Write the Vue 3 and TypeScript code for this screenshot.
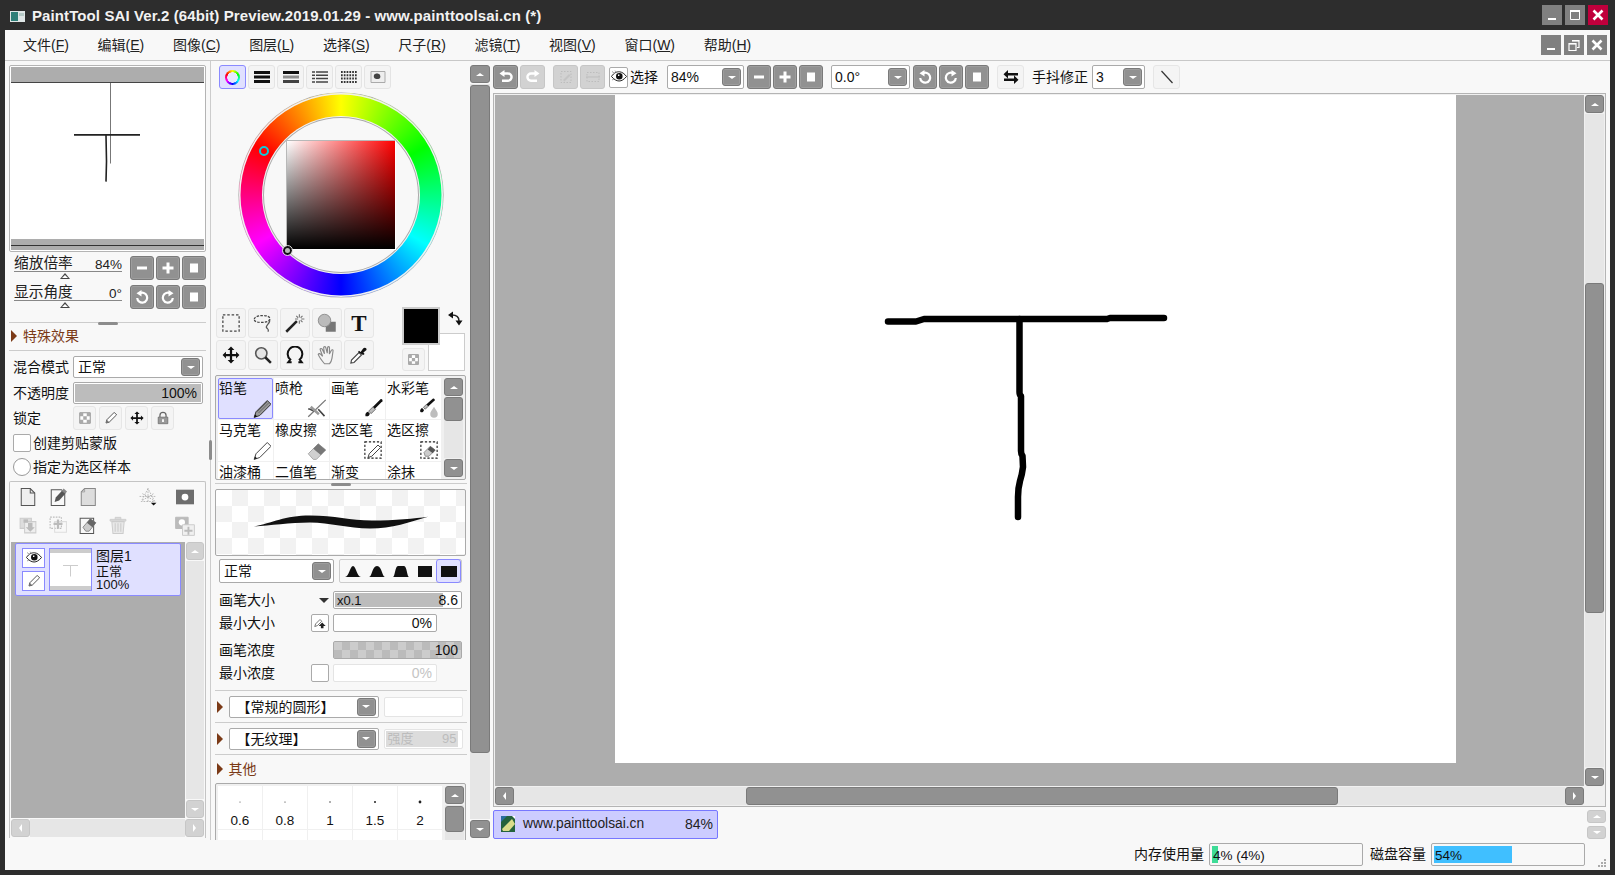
<script setup lang="ts">
import { h, type FunctionalComponent } from 'vue'

type Shape = { d: string; f?: string; s?: string; w?: number; o?: number; da?: string }

// every icon is drawn on a 16x16 grid
const ICONS: Record<string, Shape[]> = {
  minus: [{ d: 'M3 6.5h10v3H3z', f: '#fff' }],
  plus: [{ d: 'M6.5 2.5h3v4h4v3h-4v4h-3v-4h-4v-3h4z', f: '#fff' }],
  stop: [{ d: 'M4 3.5h8v9H4z', f: '#fff' }],
  rotL: [
    { d: 'M5.6 4.4A5 5 0 1 1 3.2 9', s: '#fff', w: 2.2 },
    { d: 'M7.5 1v6.5L2.5 4.2z', f: '#fff' },
  ],
  rotR: [
    { d: 'M10.4 4.4A5 5 0 1 0 12.8 9', s: '#fff', w: 2.2 },
    { d: 'M8.5 1v6.5l5-3.3z', f: '#fff' },
  ],
  undo: [
    { d: 'M5 4.5h5a3.6 3.6 0 0 1 0 7.2H4', s: '#fff', w: 2.4 },
    { d: 'M6.5 1v7L1.5 4.5z', f: '#fff' },
  ],
  redo: [
    { d: 'M11 4.5H6a3.6 3.6 0 0 0 0 7.2h6', s: '#fff', w: 2.4 },
    { d: 'M9.5 1v7l5-3.5z', f: '#fff' },
  ],
  flipSel: [
    { d: 'M3 2.5h10v11H3z', s: '#bdbdbd', w: 1, da: '1.5 1.5' },
    { d: 'M5 11 11 5l1.5 1.5-6 6z', f: '#c4c4c4' },
  ],
  flipH: [
    { d: 'M2 3.5h12v9H2z', s: '#bdbdbd', w: 1, da: '1.5 1.5' },
    { d: 'M1 8h14', s: '#bdbdbd', w: 1 },
  ],
  swap: [{ d: 'M5 1v3h10v2.4H5v3L.5 5.2zM11 6.6v3H1V12h10v3l4.5-4.2z', f: '#111' }],
  line: [{ d: 'M2.5 2 13.5 14', s: '#333', w: 1.2 }],
  eye: [
    { d: 'M.5 7.5C3 3.5 6 2.6 8.5 2.8c2.6.2 5 2 7 4.7-2.4 3-5 4.5-7.4 4.5-2.6 0-5.2-1.6-7.6-4.5z', f: '#fff', s: '#222', w: 1 },
    { d: 'M5 7.2a3.3 3.3 0 1 0 6.6 0 3.3 3.3 0 0 0-6.6 0z', f: '#111' },
    { d: 'M7 5.6h1.4v1.4H7z', f: '#fff' },
    { d: 'M1 2.5 3 4M4 1.6 5 3M1 11l2-1', s: '#666', w: 0.6 },
  ],
  pencilSm: [
    { d: 'M3 13l.8-3.2 7.4-7.4 2.4 2.4-7.4 7.4z', f: '#fff', s: '#444', w: 0.9 },
    { d: 'M3 13l.8-3.2 2.4 2.4z', f: '#777' },
  ],
  wheelBars: [{ d: 'M0 2h16v3H0zM0 6.5h16v3H0zM0 11h16v3H0z', f: '#111' }],
  fadeBars: [
    { d: 'M0 2h16v3H0z', f: '#111' },
    { d: 'M0 6.5h16v3H0z', f: '#111', o: 0.45 },
    { d: 'M0 11h16v3H0z', f: '#222', o: 0.85 },
  ],
  rows: [{ d: 'M0 3h16M0 6.3h16M0 9.6h16M0 12.9h16', s: '#444', w: 1.5, da: '3 1 12 0' }],
  dots: [{ d: 'M0 3h16M0 6.3h16M0 9.6h16M0 12.9h16', s: '#333', w: 2, da: '1.7 1.1' }],
  scratch: [
    { d: 'M1 2.5h14v11H1z', f: '#eee', s: '#aaa', w: 1 },
    { d: 'M4 6c1-2 5-2 6 0s0 4-2 4-5 0-4-4z', f: '#444' },
  ],
  // tools
  selRect: [{ d: 'M1.5 1.5h13v13h-13z', s: '#444', w: 1, da: '2 1.5' }],
  lasso: [
    { d: 'M1 5c0-2 4-3 7-3s6 1 5.5 3-4 2.5-7 2.5S1 7 1 5z', s: '#444', w: 1, da: '2 1' },
    { d: 'M13 5c2 3-4 5-2 7 1 1 2 1.2 1 3', s: '#555', w: 1 },
  ],
  wand: [
    { d: 'M1 15 9.5 6.5', s: '#222', w: 2 },
    { d: 'M11.5 1v2.5M11.5 6v2.5M8 4.8h2.5M13 4.8h2.5M9 2.3l1.5 1.5M14 2.3l-1.5 1.5M14 7.3l-1.5-1.5', s: '#777', w: 0.9 },
  ],
  shape: [
    { d: 'M7 7h8v8H7z', f: '#777' },
    { d: 'M1 6a5 5 0 1 0 10 0A5 5 0 0 0 1 6z', f: '#bbb', s: '#888', w: 0.7 },
  ],
  move: [{ d: 'M8 .5l3 3H9V7h3.5V5l3 3-3 3V9H9v3.5h2l-3 3-3-3h2V9H3.5v2l-3-3 3-3v2H7V3.5H5z', f: '#111' }],
  zoomTool: [
    { d: 'M1.5 6.5a5 5 0 1 0 10 0 5 5 0 0 0-10 0z', f: '#e4e4e4', s: '#555', w: 1.4 },
    { d: 'M10 10l5 5', s: '#222', w: 2.2 },
  ],
  rotTool: [{ d: 'M5 14.5H2l1.8-2.5a6.5 6.5 0 1 1 8.4 0L14 14.5h-3', s: '#111', w: 1.8 }],
  hand: [
    { d: 'M6 15C3.5 12 1.5 9 1 7.5c.5-1 1.5-.5 2 0L4.5 9l-2-5.500c0-1 1.300-1 1.800 0L6 7 5.300 2c0-1 1.400-1 1.700 0l1.200 4.500L8.500 2c.3-1 1.500-1 1.500.2l-.1 5 1.600-3c.6-.8 1.600-.3 1.300.8l-.8 5.500c-.3 2-1 3.500-2 4.500z', f: '#f4f4f4', s: '#888', w: 0.9 },
  ],
  dropper: [
    { d: 'M1.5 14.5 2 12l6-6 2 2-6 6z', f: '#fff', s: '#444', w: 0.9 },
    { d: 'M8 4.5l1.3 1 2-2.8c1-1 3-.8 2.7 1.2l-2.500 2 1 1.300-1.200.8L7.200 5.500z', f: '#111' },
  ],
  cornerSwap: [
    { d: 'M5 4C9 4 12 6 12 10', s: '#222', w: 1.5 },
    { d: 'M6 .5v7L1 4zM8.500 9.500h7L12 14.500z', f: '#111' },
  ],
  lockAlpha: [
    { d: 'M2 2h12v12H2z', f: '#fff', s: '#888', w: 1 },
    { d: 'M2 2h4v4H2zM10 2h4v4h-4zM6 6h4v4H6zM2 10h4v4H2zM10 10h4v4h-4z', f: '#aaa' },
  ],
  lockLock: [
    { d: 'M4.5 7V5a3.5 3.5 0 0 1 7 0v2', s: '#666', w: 1.4 },
    { d: 'M2.5 7h11v7.5h-11z', f: '#999', s: '#666', w: 0.8 },
    { d: 'M7 9.5h2v3H7z', f: '#fff' },
  ],
  minSize: [
    { d: 'M2 12l1-3 5-5 2 2-5 5z', f: '#fff', s: '#666', w: 1 },
    { d: 'M10.5 7.5l4 4H12V14H9v-2.5H6.5z', f: '#222' },
  ],
  // brushes
  pencil: [
    { d: 'M2.5 15.5 4 11 13 2l3 3-9 9z', f: '#999', s: '#333', w: 0.8 },
    { d: 'M5 11l8-8M6 12l8-8', s: '#555', w: 0.6 },
    { d: 'M2.5 15.5 3.3 13 5 14.7z', f: '#111' },
  ],
  airbrush: [
    { d: 'M1 15 15 1.5', s: '#777', w: 1 },
    { d: 'M1 9c2-1 3 2 5 1M9 9l5 5.5', s: '#444', w: 1.3 },
    { d: 'M3 7 9.5 13', s: '#999', w: 2 },
  ],
  brush: [
    { d: 'M2 14.5c-.5-2 .5-3 2-3.5l1.5 1.5c-.5 1.5-1.5 2.5-3.5 2z', f: '#111' },
    { d: 'M4.5 10.5 8 7l2 2-3.5 3.5z', f: '#bbb', s: '#555', w: 0.6 },
    { d: 'M8 7l6-6c1-.5 2 .5 1.500 1.500L9.500 8.500z', f: '#111' },
  ],
  water: [
    { d: 'M1 11c-.5-1.500.5-2.500 1.500-3L4 9.500C3.500 11 2.500 12 1 11z', f: '#111' },
    { d: 'M3.500 7.500 6 5l1.500 1.500L5 9z', f: '#bbb', s: '#555', w: 0.6 },
    { d: 'M6 5l5-4.500c1-.5 2 .5 1.500 1.500L7.500 6.500z', f: '#111' },
    { d: 'M12 7c1.500 2.500 3 4 3 5.800a3 3 0 0 1-6 0c0-1.800 1.500-3.300 3-5.800z', f: '#bdbdbd' },
  ],
  marker: [
    { d: 'M2.5 15.5 4 11 13 2l3 3-9 9z', f: '#fff', s: '#444', w: 0.8 },
    { d: 'M2.5 15.5 3.3 13 5 14.7z', f: '#222' },
  ],
  eraser: [
    { d: 'M1 11l8-8 6 5-7.500 7.500H5z', f: '#d0d0d0', s: '#aaa', w: 0.8 },
    { d: 'M5 7l4-4 6 5-4 4z', f: '#777' },
  ],
  selPen: [
    { d: 'M1.5 1.5h13v13h-13z', s: '#222', w: 0.9, da: '1.8 1.4' },
    { d: 'M4 14l1-3 7-7 2 2-7 7z', f: '#fff', s: '#444', w: 0.8 },
  ],
  selErase: [
    { d: 'M1.5 1.5h13v13h-13z', s: '#222', w: 0.9, da: '1.8 1.4' },
    { d: 'M5 13 4 10l5-5 4 3-5 5z', f: '#ccc', s: '#888', w: 0.7 },
    { d: 'M7 7.5 9 5l4 3-2 2.500z', f: '#555' },
  ],
  // layer panel
  newDoc: [{ d: 'M2 .5h8l4 4v11H2z', f: '#efefef', s: '#555', w: 0.9 }, { d: 'M10 .5v4h4', s: '#555', w: 0.9 }],
  penDoc: [
    { d: 'M2 1.5h9l3 3v11H2z', f: '#f8f8f8', s: '#555', w: 0.9 },
    { d: 'M5 12.5 6 8.500l5.500-6 3 2.500-5.500 6z', f: '#555' },
    { d: 'M11.5 2.500 13 .5l3 2.500-1.500 2z', f: '#888' },
  ],
  folder: [{ d: 'M2 3.5 5 .5h9.500v15H2z', f: '#ddd', s: '#888', w: 0.9 }, { d: 'M5 .5v3H2', s: '#999', w: 0.7 }],
  blend: [
    { d: 'M8 .5 2 12h12zM8 .5V12M.5 7.5h15M3 11l10-6M3 5l10 6', s: '#aaa', w: 0.7, da: '1.5 1' },
    { d: 'M10.5 13h5L13 15.5z', f: '#111' },
  ],
  mask: [{ d: 'M0 1.5h16v13H0z', f: '#6d6d6d' }, { d: 'M5 8a3 3 0 1 0 6 0 3 3 0 0 0-6 0z', f: '#fff' }],
  merge: [
    { d: 'M1 2h10v9H1z', f: '#ddd', s: '#ccc', w: 0.9 },
    { d: 'M5 5h10v10H5z', f: '#eee', s: '#ccc', w: 0.9 },
    { d: 'M8 6h4v4h2l-4 4-4-4h2z', f: '#bbb' },
    { d: 'M4 3h4v3H4z', f: '#bbb' },
  ],
  addLayer: [
    { d: 'M1 1h10v10H1z', s: '#bbb', w: 1, da: '1.5 1' },
    { d: 'M5 5h10.5v9.500H5z', s: '#ddd', w: 0.9 },
    { d: 'M7 3h2v3h3v2H9v3H7V8H4V6h3z', f: '#bbb' },
  ],
  erasePage: [
    { d: 'M1 2h12v13.5H1z', f: '#f8f8f8', s: '#555', w: 0.9 },
    { d: 'M3.5 10 10 2.500l5 3.500-6 7.500H6z', f: '#ccc', s: '#777', w: 0.7 },
    { d: 'M7 6l3-3.500 5 3.500-3 4z', f: '#666' },
  ],
  trash: [
    { d: 'M1 3h14v1.5H1zM5.5 3V1.200h5V3', f: '#ddd', s: '#ccc', w: 0.8 },
    { d: 'M2.5 5h11l-1 10.500h-9z', f: '#e8e8e8', s: '#ccc', w: 0.9 },
    { d: 'M5.5 6.5V14M8 6.5V14M10.5 6.5V14', s: '#ccc', w: 1 },
  ],
  addMask: [
    { d: 'M.5 1h10v9H.5z', f: '#bbb', s: '#bbb', w: 0.8 },
    { d: 'M3 5a2.5 2.5 0 1 0 5 0 2.5 2.5 0 0 0-5 0z', f: '#fff' },
    { d: 'M6 7h9.5v8.500H6z', f: '#f0f0f0', s: '#ccc', w: 0.8 },
    { d: 'M10 8.5h1.5V11H14v1.500h-2.500V15H10v-2.500H7.500V11H10z', f: '#bbb' },
  ],
  // mdi + window buttons
  winMin: [{ d: 'M4 11h8v2H4z', f: '#fff' }],
  winMax: [{ d: 'M3.5 3.5h9v9h-9z', s: '#fff', w: 1 }, { d: 'M3 3h10v2H3z', f: '#fff' }],
  winRestore: [
    { d: 'M6 3.5h7v7H11', s: '#fff', w: 1.2 },
    { d: 'M6 3h7v1.600H6z', f: '#fff' },
    { d: 'M3 6.5h7v7H3z', s: '#fff', w: 1.2 },
    { d: 'M3 6h7v1.600H3z', f: '#fff' },
  ],
  winClose: [{ d: 'M3.5 3.5l9 9M12.5 3.5l-9 9', s: '#fff', w: 2.6 }],
}

const Ico: FunctionalComponent<{ name: string; size?: number }> = (p) =>
  h(
    'svg',
    { width: p.size ?? 16, height: p.size ?? 16, viewBox: '0 0 16 16', 'aria-hidden': 'true' },
    (ICONS[p.name] ?? []).map((s) =>
      h('path', {
        d: s.d,
        fill: s.f ?? 'none',
        stroke: s.s ?? 'none',
        'stroke-width': s.w ?? 1,
        opacity: s.o ?? 1,
        'stroke-dasharray': s.da,
      }),
    ),
  )
Ico.props = ['name', 'size']

const menus = [
  ['文件', 'F'], ['编辑', 'E'], ['图像', 'C'], ['图层', 'L'], ['选择', 'S'],
  ['尺子', 'R'], ['滤镜', 'T'], ['视图', 'V'], ['窗口', 'W'], ['帮助', 'H'],
]

const colorTabs = ['', 'wheelBars', 'fadeBars', 'rows', 'dots', 'scratch']

const tools = ['selRect', 'lasso', 'wand', 'shape', 'T', 'move', 'zoomTool', 'rotTool', 'hand', 'dropper']

const brushes = [
  { name: '铅笔', icon: 'pencil', active: true },
  { name: '喷枪', icon: 'airbrush' },
  { name: '画笔', icon: 'brush' },
  { name: '水彩笔', icon: 'water' },
  { name: '马克笔', icon: 'marker' },
  { name: '橡皮擦', icon: 'eraser' },
  { name: '选区笔', icon: 'selPen' },
  { name: '选区擦', icon: 'selErase' },
  { name: '油漆桶', icon: '' },
  { name: '二值笔', icon: '' },
  { name: '渐变', icon: '' },
  { name: '涂抹', icon: '' },
]

const shapes = [
  'M0 12C4 12 5 1 8 1s4 11 8 11z',
  'M0 12C3 12 3 1 8 1s5 11 8 11z',
  'M0 12C2 12 2 1 5 1h6c3 0 3 11 5 11z',
  'M1 1h14v11H1z',
  'M0 1h16v11H0z',
]

const dotSizes = [
  { label: '0.6', r: 0.5 },
  { label: '0.8', r: 0.6 },
  { label: '1', r: 0.7 },
  { label: '1.5', r: 1 },
  { label: '2', r: 1.4 },
]

const fileName = 'www.painttoolsai.cn'
</script>

<template>
  <div class="app">
    <header class="titlebar">
      <svg class="app-icon" width="15" height="11" viewBox="0 0 15 11" aria-hidden="true">
        <path d="M0 0h15v11H0z" fill="#dfe6e6" />
        <path d="M1 1h7v9H1z" fill="#2f7f78" />
        <path d="M9 2h5v3H9z" fill="#b5c9c6" />
      </svg>
      <span class="title-text">PaintTool SAI Ver.2 (64bit) Preview.2019.01.29 - www.painttoolsai.cn (*)</span>
      <div class="win-btns">
        <button class="win-btn"><Ico name="winMin" /></button>
        <button class="win-btn"><Ico name="winMax" /></button>
        <button class="win-btn close"><Ico name="winClose" /></button>
      </div>
    </header>

    <div class="window">
      <nav class="menubar">
        <span v-for="m in menus" :key="m[1]" class="menu-item">{{ m[0] }}(<u>{{ m[1] }}</u>)</span>
        <div class="mdi-btns">
          <button class="win-btn"><Ico name="winMin" /></button>
          <button class="win-btn"><Ico name="winRestore" /></button>
          <button class="win-btn"><Ico name="winClose" /></button>
        </div>
      </nav>

      <div class="work">
        <!-- navigator + layers -->
        <aside class="left">
          <div class="navigator">
            <div class="nav-band top"></div>
            <svg class="nav-view" viewBox="11 84 193 155" preserveAspectRatio="none">
              <path d="M110.5 84v80" stroke="#777" stroke-width="1" fill="none" />
              <path d="M74 135.5h66M106 136l.5 26-.5 20" stroke="#222" stroke-width="1.6" fill="none" />
            </svg>
            <div class="nav-band bottom"></div>
          </div>

          <div class="slider-row">
            <div class="slider">
              <div class="slider-text"><span class="cjk">缩放倍率</span><span>84%</span></div>
              <i class="slider-thumb"></i>
            </div>
            <button class="btn sq"><Ico name="minus" /></button>
            <button class="btn sq"><Ico name="plus" /></button>
            <button class="btn sq"><Ico name="stop" /></button>
          </div>
          <div class="slider-row second">
            <div class="slider">
              <div class="slider-text"><span class="cjk">显示角度</span><span>0°</span></div>
              <i class="slider-thumb"></i>
            </div>
            <button class="btn sq"><Ico name="rotL" /></button>
            <button class="btn sq"><Ico name="rotR" /></button>
            <button class="btn sq"><Ico name="stop" /></button>
          </div>

          <div class="grip-line left-grip"><i></i></div>

          <div class="section-head boxed"><i class="tri"></i>特殊效果</div>

          <div class="field-row">
            <label>混合模式</label>
            <div class="combo grow"><span>正常</span><button class="btn drop"><i class="arr-d"></i></button></div>
          </div>
          <div class="field-row">
            <label>不透明度</label>
            <div class="bar grow tall"><div class="bar-fill" style="width: 100%"></div><span class="bar-r">100%</span></div>
          </div>
          <div class="field-row lock">
            <label>锁定</label>
            <div class="lock-btns">
              <button class="btn-flat"><Ico name="lockAlpha" :size="14" /></button>
              <button class="btn-flat"><Ico name="pencilSm" /></button>
              <button class="btn-flat"><Ico name="move" :size="14" /></button>
              <button class="btn-flat"><Ico name="lockLock" :size="14" /></button>
            </div>
          </div>
          <div class="check-row"><i class="check"></i>创建剪贴蒙版</div>
          <div class="check-row radio-row"><i class="radio"></i>指定为选区样本</div>

          <div class="layers">
            <div class="layer-tools">
              <Ico name="newDoc" :size="18" />
              <Ico name="penDoc" :size="18" />
              <Ico name="folder" :size="18" />
              <Ico class="push-a" name="blend" :size="18" />
              <Ico class="push-b" name="mask" :size="18" />
            </div>
            <div class="layer-tools row2">
              <Ico name="merge" :size="18" />
              <Ico name="addLayer" :size="18" />
              <Ico name="erasePage" :size="18" />
              <Ico name="trash" :size="18" />
              <Ico class="push-c" name="addMask" :size="20" />
            </div>
            <div class="layer-body">
              <div class="layer-list">
                <div class="layer-item">
                  <div class="layer-flags">
                    <span class="flag"><Ico name="eye" /></span>
                    <span class="flag"><Ico name="pencilSm" /></span>
                  </div>
                  <div class="layer-thumb">
                    <svg viewBox="0 0 41 33" width="41" height="33">
                      <path d="M13 12.5h15M20.5 12.5v11" stroke="#ccc" stroke-width="1" fill="none" />
                    </svg>
                  </div>
                  <div class="layer-info">
                    <div class="layer-name">图层1</div>
                    <div class="layer-line">正常</div>
                    <div class="layer-line">100%</div>
                  </div>
                </div>
              </div>
              <div class="vbar narrow">
                <button class="btn-s off"><i class="arr-u"></i></button>
                <div class="track"></div>
                <button class="btn-s off"><i class="arr-d"></i></button>
              </div>
            </div>
            <div class="hbar small">
              <button class="btn-s off"><i class="arr-l"></i></button>
              <div class="track"></div>
              <button class="btn-s off"><i class="arr-r"></i></button>
            </div>
          </div>
          <i class="side-grip"></i>
        </aside>

        <!-- colour + brushes -->
        <aside class="mid">
          <div class="color-tabs">
            <button v-for="(t, i) in colorTabs" :key="i" class="tab-btn" :class="{ on: i === 0 }">
              <i v-if="!t" class="mini-wheel"></i>
              <Ico v-else :name="t" />
            </button>
          </div>

          <div class="wheel">
            <div class="wheel-hole">
              <div class="sv"></div>
            </div>
            <i class="hue-mark"></i>
            <i class="sv-mark"></i>
          </div>

          <div class="tool-row">
            <div class="tools">
              <button v-for="t in tools" :key="t" class="btn-flat tool">
                <span v-if="t === 'T'" class="tool-t">T</span>
                <Ico v-else :name="t" :size="t === 'rotTool' || t === 'zoomTool' || t === 'move' ? 18 : 20" />
              </button>
            </div>
            <div class="swatches">
              <i class="swatch-bg"></i>
              <i class="swatch-fg"></i>
              <Ico class="swatch-swap" name="cornerSwap" />
              <button class="btn-flat swatch-clear"><Ico name="lockAlpha" :size="13" /></button>
            </div>
          </div>

          <div class="listbox brush-box">
            <div class="brush-grid">
              <div v-for="b in brushes" :key="b.name" class="brush" :class="{ on: b.active }">
                <span>{{ b.name }}</span>
                <Ico v-if="b.icon" :name="b.icon" :size="20" />
              </div>
            </div>
            <div class="vbar">
              <button class="btn-s"><i class="arr-u"></i></button>
              <div class="track"><div class="thumb brush-thumb"></div></div>
              <button class="btn-s"><i class="arr-d"></i></button>
            </div>
          </div>

          <div class="grip-line"><i></i></div>

          <div class="preview">
            <svg viewBox="216 490 249 65" width="249" height="65">
              <path d="M254 526.500C272 523 285 515.500 310 515.500C335 515.500 350 520.500 372 520.500C395 520.500 415 518.500 428 516.700C410 522 392 528.500 370 528.500C348 528.500 330 522.500 310 522.500C290 522.500 270 525.500 254 526.500z" fill="#111" />
            </svg>
          </div>

          <div class="mode-row">
            <div class="combo mode-combo"><span>正常</span><button class="btn drop"><i class="arr-d"></i></button></div>
            <div class="shape-box">
              <button v-for="(s, i) in shapes" :key="i" class="shape-btn" :class="{ on: i === 4 }">
                <svg width="16" height="13" viewBox="0 0 16 13"><path :d="s" fill="#111" /></svg>
              </button>
            </div>
          </div>

          <div class="prop first">
            <label>画笔大小</label>
            <i class="down-tri"></i>
            <div class="bar wide"><div class="bar-fill" style="width: 86%"></div><span class="bar-l">x0.1</span><span class="bar-r">8.6</span></div>
          </div>
          <div class="prop">
            <label>最小大小</label>
            <button class="mini-check"><Ico name="minSize" :size="14" /></button>
            <div class="input"><span>0%</span></div>
          </div>
          <div class="prop gap9">
            <label>画笔浓度</label>
            <div class="bar wide checker"><span class="bar-r">100</span></div>
          </div>
          <div class="prop gap4">
            <label>最小浓度</label>
            <button class="mini-check"></button>
            <div class="input off"><span>0%</span></div>
          </div>

          <div class="opt-row rule">
            <i class="tri"></i>
            <div class="combo opt-combo"><b>【常规的圆形】</b><button class="btn drop"><i class="arr-d"></i></button></div>
            <div class="opt-blank"></div>
          </div>
          <div class="opt-row rule">
            <i class="tri"></i>
            <div class="combo opt-combo"><b>【无纹理】</b><button class="btn drop"><i class="arr-d"></i></button></div>
            <div class="opt-blank strength"><div class="str-fill"><span>强度</span><span>95</span></div></div>
          </div>
          <div class="section-head other rule"><i class="tri"></i>其他</div>

          <div class="listbox dots-box">
            <div class="dot-grid">
              <div v-for="d in dotSizes" :key="d.label" class="dot-cell">
                <svg width="6" height="6" viewBox="0 0 6 6"><circle cx="3" cy="3" :r="d.r" fill="#222" /></svg>
                <span>{{ d.label }}</span>
              </div>
              <div v-for="n in 5" :key="n" class="dot-cell"></div>
            </div>
            <div class="vbar">
              <button class="btn-s"><i class="arr-u"></i></button>
              <div class="track"><div class="thumb dots-thumb"></div></div>
            </div>
          </div>
        </aside>

        <div class="vbar panel-scroll">
          <button class="btn-s"><i class="arr-u"></i></button>
          <div class="track"><div class="thumb panel-thumb"></div></div>
          <button class="btn-s"><i class="arr-d"></i></button>
        </div>

        <!-- canvas -->
        <main class="right">
          <div class="toolbar">
            <button class="btn tb"><Ico name="undo" /></button>
            <button class="btn tb off"><Ico name="redo" /></button>
            <button class="btn tb off ml6"><Ico name="flipSel" /></button>
            <button class="btn tb off"><Ico name="flipH" /></button>
            <span class="sel-eye"><Ico name="eye" :size="16" /></span>
            <span class="tb-label">选择</span>
            <div class="combo tb-combo zoom-combo"><span>84%</span><button class="btn drop"><i class="arr-d"></i></button></div>
            <button class="btn tb n first-n"><Ico name="minus" /></button>
            <button class="btn tb n"><Ico name="plus" /></button>
            <button class="btn tb n"><Ico name="stop" /></button>
            <div class="combo tb-combo angle"><span>0.0°</span><button class="btn drop"><i class="arr-d"></i></button></div>
            <button class="btn tb n first-n"><Ico name="rotL" /></button>
            <button class="btn tb n"><Ico name="rotR" /></button>
            <button class="btn tb n"><Ico name="stop" /></button>
            <button class="btn-flat swap-btn"><Ico name="swap" /></button>
            <span class="tb-label stab">手抖修正</span>
            <div class="combo tb-combo stab-combo"><span>3</span><button class="btn drop"><i class="arr-d"></i></button></div>
            <button class="btn-flat line-btn"><Ico name="line" /></button>
          </div>

          <div class="canvas-box">
            <div class="canvas-area">
              <div class="page">
                <svg viewBox="615 95 841 668" width="841" height="668">
                  <g fill="none" stroke="#000" stroke-width="6.5" stroke-linecap="round" stroke-linejoin="round">
                    <path d="M888 321.5h28l8-2.500h183l3-1h54" />
                    <path d="M1019.5 319V392Q1019.5 395 1021 396V451Q1021 454 1022.5 456L1023 467Q1022 475 1020 481Q1018 488 1018 497V517" />
                  </g>
                </svg>
              </div>
            </div>
            <div class="vbar canvas-v">
              <button class="btn-s"><i class="arr-u"></i></button>
              <div class="track"><div class="thumb canvas-vthumb"></div></div>
              <button class="btn-s"><i class="arr-d"></i></button>
            </div>
            <div class="hbar">
              <button class="btn-s"><i class="arr-l"></i></button>
              <div class="track"><div class="thumb canvas-hthumb"></div></div>
              <button class="btn-s"><i class="arr-r"></i></button>
            </div>
            <div class="corner"></div>
          </div>

          <div class="tabbar">
            <div class="doc-tab">
              <svg width="14" height="16" viewBox="0 0 14 16" aria-hidden="true">
                <path d="M0 0h14v16H0z" fill="#24623c" />
                <path d="M1 13 11 3l3 5-6 7H2z" fill="#d9dc8a" />
                <path d="M0 0h6L0 6z" fill="#2a6ea0" />
                <path d="M11 0h3v3z" fill="#fff" />
              </svg>
              <span class="doc-name">{{ fileName }}</span>
              <span class="doc-zoom">84%</span>
            </div>
            <div class="tab-scroll">
              <button class="btn-s off tiny"><i class="arr-u"></i></button>
              <button class="btn-s off tiny"><i class="arr-d"></i></button>
            </div>
          </div>
        </main>
      </div>

      <footer class="status">
        <span>内存使用量</span>
        <div class="meter"><div class="meter-fill green" style="width: 4%"></div><span>4% (4%)</span></div>
        <span class="disk">磁盘容量</span>
        <div class="meter"><div class="meter-fill blue" style="width: 53%"></div><span>54%</span></div>
        <svg class="resize-grip" width="10" height="10" viewBox="0 0 10 10" aria-hidden="true">
          <path d="M7 1h2v2H7zM4 4h2v2H4zM7 4h2v2H7zM1 7h2v2H1zM4 7h2v2H4zM7 7h2v2H7z" fill="#aaa" />
        </svg>
      </footer>
    </div>
  </div>
</template>

<style>
html, body { margin: 0; background: #2d2d2d; }
</style>

<style scoped>
.app {
  width: 1615px;
  height: 875px;
  background: #2d2d2d;
  display: flex;
  flex-direction: column;
  overflow: hidden;
  font: 14px/1 "Liberation Sans", "Noto Sans CJK SC", sans-serif;
  color: #111;
}
button { padding: 0; margin: 0; font: inherit; display: flex; align-items: center; justify-content: center; flex: none; }
i { display: block; flex: none; }
label { flex: none; }

/* title bar */
.titlebar { height: 30px; flex: none; display: flex; align-items: center; padding-left: 10px; color: #fff; }
.app-icon { flex: none; margin-top: 2px; }
.title-text { margin-left: 7px; font-weight: 700; font-size: 15px; color: #f2f2f2; letter-spacing: .1px; }
.win-btns { margin-left: auto; margin-right: 7px; display: flex; gap: 3px; }
.win-btn { width: 20px; height: 20px; border: 0; background: #808080; }
.win-btn.close { background: #c0003c; }

.window { flex: 1; min-height: 0; margin: 0 5px 5px; background: #f8f8f8; display: flex; flex-direction: column; }

.menubar { height: 31px; flex: none; display: flex; align-items: center; gap: 28.7px; padding-left: 18px; border-bottom: 1px solid #c8c8c8; box-sizing: border-box; }
.menu-item { white-space: nowrap; font-size: 14px; color: #222; }
.mdi-btns { margin-left: auto; margin-right: 3px; display: flex; gap: 3px; }

.work { flex: 1; min-height: 0; display: flex; }

/* shared widgets */
.btn { background: #919191; border: 1px solid #7a7a7a; border-radius: 3px; box-sizing: border-box; box-shadow: inset 0 0 0 1px #9d9d9d; }
.btn.sq { width: 24px; height: 24px; }
.btn.off { background: #d2d2d2; border-color: #c6c6c6; box-shadow: none; }
.btn-flat { background: #f4f4f4; border: 1px solid #e6e6e6; border-radius: 3px; box-sizing: border-box; }
.btn-s { width: 100%; height: 18px; background: #919191; border: 1px solid #7a7a7a; border-radius: 3px; box-sizing: border-box; }
.btn-s.off { background: #d2d2d2; border-color: #c6c6c6; }
.arr-u { width: 0; height: 0; border: 4px solid transparent; border-top: 0; border-bottom: 3px solid #fff; }
.arr-d { width: 0; height: 0; border: 4px solid transparent; border-bottom: 0; border-top: 3px solid #fff; }
.arr-l { width: 0; height: 0; border: 4px solid transparent; border-left: 0; border-right: 3px solid #fff; }
.arr-r { width: 0; height: 0; border: 4px solid transparent; border-right: 0; border-left: 3px solid #fff; }
.track { flex: 1; background: #e6e6e6; position: relative; min-width: 0; min-height: 0; }
.vbar { display: flex; flex-direction: column; gap: 1px; width: 19px; flex: none; }
.hbar { display: flex; gap: 0; height: 18px; }
.hbar .btn-s { width: 19px; height: 100%; }
.thumb { background: #919191; border: 1px solid #7a7a7a; border-radius: 3px; box-sizing: border-box; }

.combo { display: flex; align-items: center; height: 24px; background: #fff; border: 1px solid #aaa; border-radius: 2px; box-sizing: border-box; padding: 0 2px 0 4px; }
.combo > span, .combo > b { flex: 1; font-weight: 400; white-space: nowrap; }
.btn.drop { width: 19px; height: 18px; }
.grow { flex: 1; min-width: 0; }

.bar { position: relative; height: 18px; border: 1px solid #aaa; border-radius: 2px; padding: 1px; box-sizing: border-box; background: #fff; display: flex; }
.bar.tall { height: 22px; }
.bar-fill { background: #bcbcbc; height: 100%; }
.bar-r { position: absolute; right: 3px; top: 50%; transform: translateY(-50%); }
.bar.tall .bar-r { right: 5px; }
.bar-l { position: absolute; left: 3px; top: 50%; transform: translateY(-50%); font-size: 13px; }

.tri { width: 0; height: 0; border: 6px solid transparent; border-right: 0; border-left: 6.5px solid #7b3a17; }
.section-head { display: flex; align-items: center; color: #7b3a17; font-size: 14px; }
.section-head .tri { margin-right: 6px; }

.grip-line { height: 8px; position: relative; display: flex; align-items: center; justify-content: center; flex: none; }
.grip-line::before { content: ""; position: absolute; left: 0; right: 0; top: 3px; height: 1px; background: #ccc; }
.grip-line i { width: 20px; height: 3px; background: #8c8c8c; border-radius: 2px; position: relative; }

/* left column */
.left { width: 206px; flex: none; box-sizing: border-box; border-right: 1px solid #ccc; padding: 4px 4px 0; position: relative; display: flex; flex-direction: column; min-height: 0; }
.navigator { height: 187px; border: 1px solid #b4b4b4; border-radius: 2px; padding: 1px; box-sizing: border-box; display: flex; flex-direction: column; background: #fff; flex: none; }
.nav-band { background: #adadad; flex: none; }
.nav-band.top { height: 16px; border-bottom: 1px solid #444; box-sizing: border-box; }
.nav-band.bottom { height: 11px; position: relative; }
.nav-band.bottom::after { content: ""; position: absolute; left: 0; right: 0; top: 6px; height: 1px; background: #333; }
.nav-view { flex: 1; min-height: 0; width: 100%; background: #fff; }

.slider-row { display: flex; gap: 2px; margin-top: 4px; height: 24px; flex: none; }
.slider-row.second { margin-top: 5px; }
.slider { width: 109px; margin: 0 6px 0 5px; position: relative; }
.slider-text { display: flex; justify-content: space-between; align-items: flex-end; height: 15px; border-bottom: 1px solid #888; font-size: 13.5px; color: #222; white-space: nowrap; }
.slider-text .cjk { font-size: 14.7px; }
.slider-thumb { position: absolute; left: 46px; top: 17px; width: 0; height: 0; border: 5px solid transparent; border-top: 0; border-bottom: 6px solid #444; }
.slider-thumb::after { content: ""; position: absolute; left: -3px; top: 2px; width: 0; height: 0; border: 3px solid transparent; border-top: 0; border-bottom: 3px solid #fff; }

.left-grip { margin-top: 10px; }
.section-head.boxed { height: 24px; border-bottom: 1px solid #ccc; padding: 0 0 5px 2px; box-sizing: border-box; flex: none; }
.field-row { display: flex; align-items: center; gap: 4px; height: 22px; margin-top: 4px; padding-left: 4px; flex: none; margin-right: 3px; }
.section-head.boxed + .field-row { margin-top: 5px; }
.field-row .combo { height: 22px; }
.field-row.lock { height: 24px; margin-top: 2px; }
.lock-btns { display: flex; gap: 3px; margin-left: 28px; }
.lock-btns .btn-flat { width: 23px; height: 24px; }
.check-row { display: flex; align-items: center; gap: 2px; padding-left: 4px; height: 18px; margin-top: 4px; flex: none; }
.radio-row { margin-top: 6px; }
.check { width: 18px; height: 18px; background: #fff; border: 1px solid #aaa; border-radius: 2px; box-sizing: border-box; }
.radio { width: 18px; height: 18px; background: #fff; border: 1px solid #999; border-radius: 50%; box-sizing: border-box; }

.layers { flex: 1; min-height: 0; margin-top: 5px; margin-bottom: 2px; border: 1px solid #c4c4c4; border-bottom: 0; border-radius: 2px 2px 0 0; padding: 1px; display: flex; flex-direction: column; }
.layer-tools { display: flex; gap: 12px; padding: 5px 0 0 8px; height: 18px; flex: none; }
.layer-tools.row2 { padding-top: 10px; height: 20px; }
.push-a { margin-left: 30px; }
.push-b { margin-left: 7px; }
.push-c { margin-left: 36px; }
.layer-body { flex: 1; min-height: 0; display: flex; gap: 1px; margin-top: 6px; }
.layer-list { flex: 1; background: #adadad; padding: 1px 4px; }
.layer-item { height: 53px; box-sizing: border-box; background: #e0e0ff; border: 1px solid #8a8aff; border-radius: 2px; display: flex; padding: 4px 0 0 6px; }
.layer-flags { display: flex; flex-direction: column; gap: 3px; }
.flag { width: 23px; height: 20px; background: #fff; border: 1px solid #8a8aff; box-sizing: border-box; display: flex; align-items: center; justify-content: center; }
.layer-thumb { width: 43px; height: 43px; margin-left: 4px; border: 1px solid #8a8aff; box-sizing: border-box; background: #ccc; display: flex; align-items: center; justify-content: center; }
.layer-thumb svg { background: #fff; }
.layer-info { margin-left: 4px; }
.layer-name { font-size: 14px; margin-top: 1px; }
.layer-line { font-size: 13px; line-height: 13px; }
.layer-name + .layer-line { margin-top: 2px; }
.vbar.narrow { width: 18px; }
.hbar.small { margin-top: 1px; }
.side-grip { position: absolute; right: -2px; top: 379px; width: 3px; height: 20px; background: #8c8c8c; border-radius: 2px; }

/* middle column */
.mid { width: 259px; flex: none; box-sizing: border-box; padding: 4px 3px 0 4px; display: flex; flex-direction: column; overflow: hidden; }
.color-tabs { display: flex; gap: 2px; padding-left: 4px; flex: none; }
.tab-btn { width: 27px; height: 24px; background: #f4f4f4; border: 1px solid #e4e4e4; border-radius: 3px; box-sizing: border-box; }
.tab-btn.on { background: #e0e0ff; border-color: #8a8aff; }
.mini-wheel { width: 15px; height: 15px; border-radius: 50%; background: radial-gradient(circle, #e8e8ff 0 5px, transparent 5.5px), conic-gradient(from -60deg, red, yellow, lime, cyan, blue, magenta, red); }

.wheel { width: 204px; height: 204px; margin: 4px 0 0 24px; border-radius: 50%; position: relative; flex: none; background: conic-gradient(from -60deg, #f00, #ff0, #0f0, #0ff, #00f, #f0f, #f00); box-shadow: 0 0 0 .6px #aaa, inset 0 0 0 1.5px #f0f0f0; display: flex; align-items: center; justify-content: center; }
.wheel-hole { width: 156px; height: 156px; border-radius: 50%; background: #f8f8f8; box-shadow: inset 0 0 0 1px #aaa, 0 0 0 1px #f2f2f2; display: flex; align-items: center; justify-content: center; }
.sv { width: 110px; height: 110px; box-sizing: border-box; border: 1px solid #b8b8b8; border-right-color: #fff; border-bottom-color: #fff; background: linear-gradient(to top, #000, transparent), linear-gradient(to right, #fff, #f00); }
.hue-mark { position: absolute; left: 20px; top: 53px; width: 10px; height: 10px; border-radius: 50%; border: 2.5px solid #10c8d8; box-sizing: border-box; }
.sv-mark { position: absolute; left: 44px; top: 153px; width: 9px; height: 9px; border: 2px solid #111; outline: 1px solid #ddd; border-radius: 50%; box-sizing: border-box; background: #bbb; }

.tool-row { display: flex; margin-top: 11px; flex: none; }
.tools { display: grid; grid-template-columns: repeat(5, 30px); grid-auto-rows: 30px; gap: 2px; margin-left: 1px; }
.tool { width: 30px; height: 30px; }
.tool-t { font: 700 23px/1 "Liberation Serif", serif; color: #111; }
.swatches { position: relative; width: 63px; height: 63px; margin-left: 28px; }
.swatch-fg { position: absolute; left: 0; top: -1px; width: 38px; height: 38px; background: #000; border: 2px solid #ccc; box-sizing: border-box; }
.swatch-bg { position: absolute; right: 0; bottom: 0; width: 37px; height: 38px; background: #fff; border: 1px solid #ccc; box-sizing: border-box; }
.swatch-swap { position: absolute; left: 45px; top: 3px; }
.swatch-clear { position: absolute; left: 0; bottom: 0; width: 23px; height: 23px; }

.listbox { border: 1px solid #aaa; border-radius: 2px; box-sizing: border-box; padding: 2px; display: flex; background: #f0f0f0; flex: none; }
.brush-box { height: 105px; width: 251px; margin-top: 4px; overflow: hidden; gap: 3px; }
.brush-grid { display: grid; grid-template-columns: repeat(4, 55px); grid-auto-rows: 41px; gap: 1px; }
.brush { background: #fff; position: relative; box-sizing: border-box; padding: 3px 1px; }
.brush.on { background: #e0e0ff; outline: 1px solid #8a8aff; outline-offset: -1px; border-radius: 2px; }
.brush svg { position: absolute; right: 2px; bottom: 1px; }
.brush-thumb { height: 24px; }
.brush-box .vbar { width: 19px; }

.preview { height: 67px; width: 251px; margin-top: 1px; border: 1px solid #aaa; border-radius: 2px; box-sizing: border-box; background: #fff; background-image: conic-gradient(#f2f2f2 25%, #fff 0 50%, #f2f2f2 0 75%, #fff 0); background-size: 32px 32px; flex: none; }
.preview svg { display: block; filter: blur(.3px); }

.mode-row { display: flex; margin-top: 3px; gap: 5px; padding-left: 4px; height: 25px; flex: none; }
.mode-combo { width: 115px; height: 24px; }
.shape-box { display: flex; border: 1px solid #ccc; border-radius: 2px; box-sizing: border-box; width: 123px; height: 24px; padding: 0 1px; gap: 1px; }
.shape-btn { width: 23px; height: 22px; background: transparent; border: 0; }
.shape-btn.on { background: #e0e0ff; outline: 1px solid #8a8aff; border-radius: 2px; }

.prop { display: flex; align-items: center; height: 18px; margin-top: 5px; padding-left: 4px; flex: none; }
.prop.first { margin-top: 7px; }
.prop.gap9 { margin-top: 9px; }
.prop.gap4 { margin-top: 4px; height: 19px; }
.prop label { width: 92px; }
.down-tri { width: 0; height: 0; border: 5px solid transparent; border-bottom: 0; border-top: 5px solid #333; margin-left: 8px; }
.bar.wide { width: 129px; flex: none; margin-left: auto; margin-right: 5px; }
.checker { background: #ddd conic-gradient(#bbb 25%, #ccc 0 50%, #bbb 0 75%, #ccc 0) 0 0 / 16px 16px; background-clip: padding-box; }
.mini-check { width: 18px; height: 18px; background: #fff; border: 1px solid #aaa; border-radius: 2px; box-sizing: border-box; }
.input { width: 104px; height: 18px; margin-left: 4px; background: #fff; border: 1px solid #aaa; border-radius: 2px; box-sizing: border-box; text-align: right; padding: 1px 4px 0 0; }
.input.off { border-color: #e4e4e4; color: #c4c4c4; }

.rule { border-top: 1px solid #ccc; flex: none; }
.opt-row { display: flex; align-items: center; height: 32px; box-sizing: border-box; padding: 5px 0 5px 2px; }
.prop.gap4 + .rule { margin-top: 8px; }
.opt-row .tri { margin-right: 5.5px; }
.opt-combo { width: 150px; height: 22px; }
.opt-combo b { padding-left: 3px; }
.opt-blank { width: 79px; height: 20px; margin-left: 5px; background: #fff; border: 1px solid #e4e4e4; border-radius: 2px; box-sizing: border-box; padding: 1px; }
.str-fill { background: #dcdcdc; width: 72px; height: 100%; display: flex; justify-content: space-between; align-items: center; color: #bcbcbc; font-size: 13px; padding: 0 1px 0 2px; box-sizing: border-box; }
.section-head.other { height: 29px; padding-left: 2px; box-sizing: border-box; flex: none; }
.section-head.other .tri { margin-right: 5.5px; }

.dots-box { height: 60px; width: 251px; overflow: hidden; gap: 3px; align-items: flex-start; }
.dot-grid { display: grid; grid-template-columns: repeat(5, 44px); grid-auto-rows: 43px; gap: 1px; }
.dot-cell { background: #fff; display: flex; flex-direction: column; align-items: center; padding-top: 13px; box-sizing: border-box; gap: 9px; font-size: 13.5px; }
.dots-box .vbar { width: 19px; height: 80px; }
.dots-thumb { height: 26px; margin-top: 1px; }

.panel-scroll { width: 20px; margin: 4px 0 2px 0; }
.panel-scroll .track { display: flex; }
.panel-thumb { flex: none; width: 100%; height: 668px; margin-top: 1px; }

/* right side */
.right { flex: 1; min-width: 0; display: flex; flex-direction: column; padding: 4px 4px 1px 3px; }
.toolbar { display: flex; align-items: center; gap: 2px; height: 24px; flex: none; }
.btn.tb { width: 25px; height: 24px; }
.btn.tb.n { width: 24px; }
.btn.tb.first-n { margin-left: 1px; }
.ml6 { margin-left: 6px; }
.sel-eye { width: 19px; height: 21px; background: #fff; border: 1px solid #aaa; border-radius: 2px; box-sizing: border-box; display: flex; align-items: center; justify-content: center; margin-left: 2px; }
.tb-label { white-space: nowrap; }
.tb-combo { width: 77px; padding-left: 3px; }
.tb-combo .btn.drop { margin-left: auto; }
.zoom-combo { margin-left: 7px; }
.angle { width: 79px; margin-left: 6px; }
.swap-btn { width: 27px; height: 24px; margin-left: 6px; }
.tb-label.stab { margin-left: 6px; }
.stab-combo { width: 53px; margin-left: 2px; }
.line-btn { width: 27px; height: 24px; margin-left: 6px; }

.canvas-box { flex: 1; min-height: 0; margin-top: 4px; border: 1px solid #b4b4b4; box-sizing: border-box; padding: 1px; display: grid; grid-template-columns: 1fr 19px; grid-template-rows: 1fr 18px; gap: 1px; background: #f0f0f0; }
.canvas-area { background: #adadad; padding: 0 128px 23px 120px; min-height: 0; min-width: 0; }
.page { background: #fff; height: 100%; }
.page svg { display: block; }
.page svg g { filter: blur(.4px); }
.canvas-v .track { display: flex; }
.canvas-vthumb { width: 100%; height: 330px; margin-top: 169px; flex: none; }
.hbar .track { display: flex; }
.canvas-hthumb { width: 592px; height: 100%; margin-left: 232px; flex: none; }
.corner { background: #f0f0f0; }

.tabbar { height: 29px; flex: none; display: flex; margin-top: 3px; }
.doc-tab { width: 225px; box-sizing: border-box; background: #ccccff; border: 1px solid #7777ff; border-radius: 2px; display: flex; align-items: center; padding: 0 4px 1px 7px; }
.doc-name { margin-left: 8px; color: #222; font-size: 13.8px; }
.doc-zoom { margin-left: auto; color: #222; }
.tab-scroll { margin-left: auto; width: 19px; display: flex; flex-direction: column; gap: 3px; }
.btn-s.tiny { height: 13px; }

.status { height: 30px; flex: none; box-sizing: border-box; display: flex; align-items: flex-start; justify-content: flex-end; padding: 3px 25px 0 0; position: relative; }
.status > span { line-height: 23px; }
.meter { position: relative; width: 154px; height: 23px; margin-left: 5px; border: 1px solid #aaa; border-radius: 2px; padding: 2px; box-sizing: border-box; background: #f8f8f8; }
.meter > span { position: absolute; left: 3px; top: 5px; font-size: 13.5px; }
.meter-fill { height: 100%; }
.meter-fill.green { background: #3ddc97; }
.meter-fill.blue { background: #40bfff; }
.disk { margin-left: 7px; }
.resize-grip { position: absolute; right: 3px; bottom: 2px; }
</style>
